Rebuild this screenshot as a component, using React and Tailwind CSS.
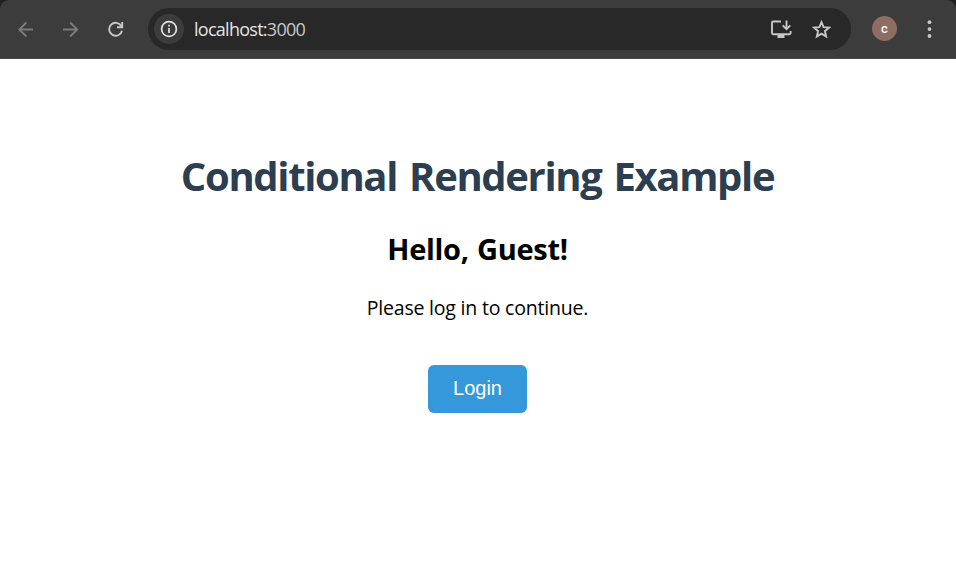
import React from 'react';

function BackIcon() {
  return (
    <svg className="h-4 w-4 text-[#7b7b7b]" viewBox="0 0 16 16" fill="none" stroke="currentColor" strokeWidth="1.9">
      <path d="M15 8.5H1.5M8.3 1.5L1.3 8.5l7 7" />
    </svg>
  );
}

function ForwardIcon() {
  return (
    <svg className="h-4 w-4 text-[#7b7b7b]" viewBox="0 0 16 16" fill="none" stroke="currentColor" strokeWidth="1.9">
      <path d="M0 8.5h13.7M7.2 1.5l7 7-7 7" />
    </svg>
  );
}

function ReloadIcon() {
  return (
    <svg className="h-4 w-4 text-[#c7c7c7]" viewBox="0 0 16 16" fill="none" stroke="currentColor" strokeWidth="1.9">
      <path d="M13.4 5.2A6.5 6.5 0 1 0 14 9.8" />
      <path d="M14.2 1v5.2H9" />
    </svg>
  );
}

function InfoIcon() {
  return (
    <svg className="h-[18px] w-[18px] text-[#e3e3e3]" viewBox="0 0 18 18" fill="none" stroke="currentColor" strokeWidth="1.7">
      <circle cx="9" cy="9" r="7.4" />
      <path d="M9 8v5M9 4.8v1.8" />
    </svg>
  );
}

function InstallIcon() {
  return (
    <svg className="h-5 w-[22px] text-[#c7c7c7]" viewBox="0 0 22 20" fill="none" stroke="currentColor" strokeWidth="1.9">
      <path d="M11 2.5H3.2A1.2 1.2 0 0 0 2 3.7V14a1.2 1.2 0 0 0 1.2 1.2h16.2a1.2 1.2 0 0 0 1.2-1.2v-2" />
      <path d="M16.5 1.5v8.2M12.7 6.4l3.8 3.8 3.8-3.8" />
      <path d="M7.5 15h7v4h-7z" fill="currentColor" stroke="none" />
    </svg>
  );
}

function StarIcon() {
  return (
    <svg className="h-5 w-5 text-[#c7c7c7]" viewBox="0 0 20 20" fill="none" stroke="currentColor" strokeWidth="1.9">
      <path d="M10.5 3.2l2.1 4.95 5.4.47-4.1 3.55 1.25 5.3-4.65-2.82-4.65 2.82 1.25-5.3L3 8.62l5.4-.47z" />
    </svg>
  );
}

function MenuIcon() {
  return (
    <svg className="h-[18px] w-[5px] text-[#c7c7c7]" viewBox="0 0 5 18" fill="currentColor">
      <circle cx="2.5" cy="2.2" r="1.9" />
      <circle cx="2.5" cy="9.1" r="1.9" />
      <circle cx="2.5" cy="16" r="1.9" />
    </svg>
  );
}

function BrowserBar() {
  return (
    <header className="h-[59px] bg-[#202020]">
      <div className="flex h-full items-start rounded-t-[9px] border-b border-[#484848] bg-[#3c3c3c] pt-2">
        <nav className="ml-[18px] flex h-[41px] items-center gap-[29px]">
          <BackIcon />
          <ForwardIcon />
          <ReloadIcon />
        </nav>
        <div className="ml-6 flex h-[42px] w-[703px] items-center rounded-full bg-[#282828] pl-1.5 pr-5">
          <span className="flex h-[30px] w-[30px] items-center justify-center rounded-full bg-[#3c3c3c]">
            <InfoIcon />
          </span>
          <span className="ml-2.5 whitespace-nowrap font-['Open_Sans',sans-serif] text-[18px] leading-6 tracking-[-0.73px] text-[#e3e3e3]">
            localhost:<span className="text-[#c7c7c7]">3000</span>
          </span>
          <span className="ml-auto flex items-center gap-[19px]">
            <InstallIcon />
            <StarIcon />
          </span>
        </div>
        <div className="ml-[21px] flex h-[41px] items-center">
          <span className="flex h-[25px] w-[25px] items-center justify-center rounded-full bg-[#8d6e63] pb-px font-[Roboto,sans-serif] text-[13px] font-medium leading-none text-white">
            c
          </span>
        </div>
        <div className="ml-[30px] flex h-[41px] items-center">
          <MenuIcon />
        </div>
      </div>
    </header>
  );
}

export default function App() {
  return (
    <div className="flex h-[568px] w-[956px] flex-col overflow-hidden bg-white">
      <BrowserBar />
      <main className="flex flex-col items-center pr-px font-['Open_Sans',sans-serif] text-black">
        <h1 className="mt-[89px] whitespace-nowrap text-[40px] font-bold leading-[56px] tracking-[-1.35px] text-[#2c3e50] [word-spacing:3px]">
          Conditional Rendering Example
        </h1>
        <h2 className="mt-[25px] whitespace-nowrap text-[29px] font-bold leading-10 tracking-[-0.3px] [word-spacing:1px]">Hello, Guest!</h2>
        <p className="mt-[25px] whitespace-nowrap text-[19.5px] leading-7 tracking-[-0.2px]">Please log in to continue.</p>
        <button className="mt-[43px] h-12 w-[99px] rounded-md bg-[#3498db] pb-0.5 font-['Liberation_Sans',sans-serif] text-[20px] text-white">
          Login
        </button>
      </main>
    </div>
  );
}
